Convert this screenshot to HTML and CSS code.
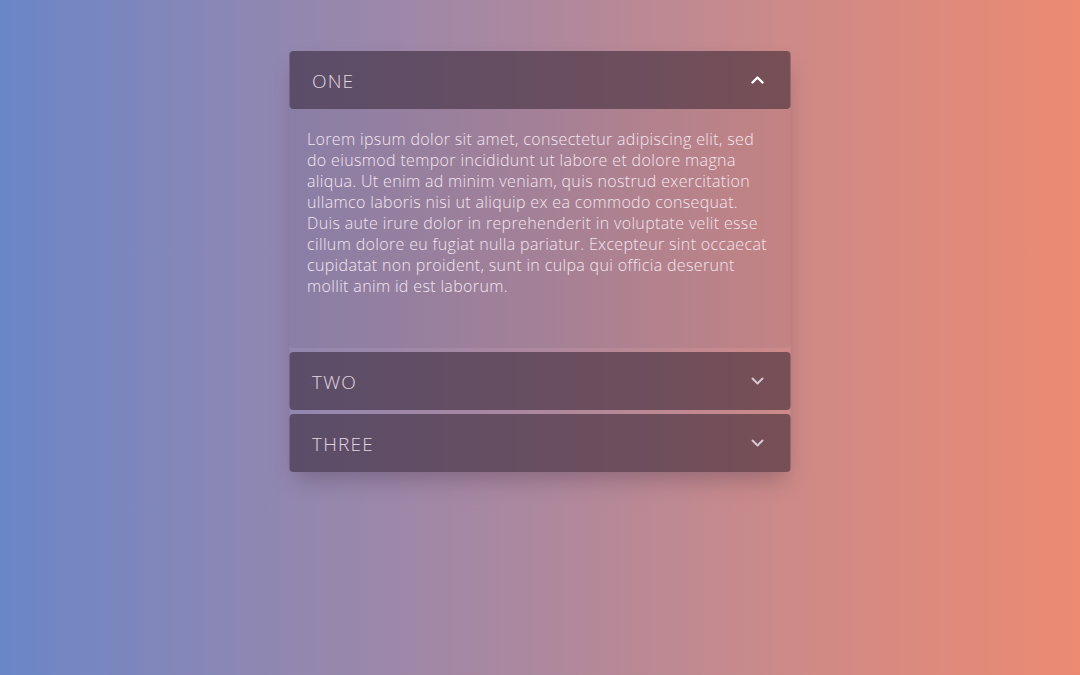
FILE: index.html
```html
<!DOCTYPE html>
<html>
<head>
<meta charset="utf-8">
<link rel="stylesheet" href="styles.css">
</head>
<body>
<div class="accordion">
  <div class="item open">
    <div class="header">
      <span class="title">One</span>
      <svg class="chev" width="14" height="10" viewBox="0 0 14 10"><path d="M2 7.5 L7 2.5 L12 7.5" fill="none" stroke="currentColor" stroke-width="2.4" stroke-linecap="round" stroke-linejoin="round"/></svg>
    </div>
    <div class="content">
      <p>Lorem ipsum dolor sit amet, consectetur adipiscing elit, sed do eiusmod tempor incididunt ut labore et dolore magna aliqua. Ut enim ad minim veniam, quis nostrud exercitation ullamco laboris nisi ut aliquip ex ea commodo consequat. Duis aute irure dolor in reprehenderit in voluptate velit esse cillum dolore eu fugiat nulla pariatur. Excepteur sint occaecat cupidatat non proident, sunt in culpa qui officia deserunt mollit anim id est laborum.</p>
    </div>
  </div>
  <div class="item">
    <div class="header">
      <span class="title">Two</span>
      <svg class="chev dim" width="14" height="10" viewBox="0 0 14 10"><path d="M2 2.5 L7 7.5 L12 2.5" fill="none" stroke="currentColor" stroke-width="2" stroke-linecap="round" stroke-linejoin="round"/></svg>
    </div>
  </div>
  <div class="item">
    <div class="header">
      <span class="title">Three</span>
      <svg class="chev dim" width="14" height="10" viewBox="0 0 14 10"><path d="M2 2.5 L7 7.5 L12 2.5" fill="none" stroke="currentColor" stroke-width="2" stroke-linecap="round" stroke-linejoin="round"/></svg>
    </div>
  </div>
</div>
</body>
</html>
```
FILE: styles.css
```css
html, body {
  margin: 0;
  height: 100%;
}
body {
  background: linear-gradient(to right, #6a86c8 0%, #8c87b4 22%, #ad889e 50%, #d08a86 75%, #ec8a72 100%);
  font-family: "Open Sans", "DejaVu Sans", sans-serif;
  padding-top: 51px;
  box-sizing: border-box;
}
.accordion {
  width: 501px;
  margin: 0 auto;
  display: flex;
  flex-direction: column;
  gap: 4px;
  box-shadow: 0 12px 22px -6px rgba(60, 40, 60, 0.35);
  border-radius: 4px;
  transform: translateX(-0.5px);
}
.header {
  height: 58px;
  background: rgba(40, 25, 40, 0.52);
  border-radius: 4px;
  display: flex;
  align-items: center;
  justify-content: space-between;
  padding: 0 26px 0 23px;
  box-sizing: border-box;
}
.title {
  text-transform: uppercase;
  color: #e2d6e0;
  font-size: 19px;
  font-weight: 300;
  letter-spacing: 1.2px;
  padding-top: 2px;
}
.chev {
  color: #ffffff;
  display: block;
}
.chev.dim {
  color: #d6c8d2;
}
.content {
  background: linear-gradient(to right, rgba(40, 25, 50, 0.08), rgba(40, 25, 50, 0.06));
  height: 239px;
  padding: 20px 16px 0 18px;
  box-sizing: border-box;
  border-radius: 0 0 4px 4px;
}
.content p {
  margin: 0;
  color: #f3e6ef;
  font-size: 16px;
  font-weight: 300;
  line-height: 21px;
  letter-spacing: 0.35px;
}
```
